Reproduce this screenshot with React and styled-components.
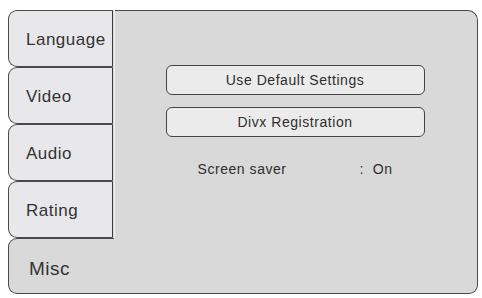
import React from "react";
import styled, { createGlobalStyle } from "styled-components";

const Global = createGlobalStyle`
  html, body { margin: 0; padding: 0; background: #ffffff; }
  body { font-family: "Liberation Sans", Arial, sans-serif; }
`;

const Frame = styled.div`
  display: flex;
  width: 470px;
  height: 284px;
  margin: 10px 0 0 8px;
`;

const TabColumn = styled.div`
  display: flex;
  flex-direction: column;
  width: 105px;
  position: relative;
  z-index: 1;
`;

const Tab = styled.div`
  box-sizing: border-box;
  display: flex;
  align-items: center;
  height: ${(p) => (p.$selected ? "auto" : "57px")};
  flex: ${(p) => (p.$selected ? "1" : "none")};
  padding-left: ${(p) => (p.$selected ? "20px" : "17px")};
  padding-top: ${(p) => (p.$selected ? "5px" : "3px")};
  border: 1px solid #4a4a4a;
  border-right: ${(p) => (p.$selected ? "none" : "1px solid #3a3a3a")};
  border-radius: 9px 0 0 9px;
  background: ${(p) => (p.$selected ? "#d9d9d9" : "#e8e8ea")};
  box-shadow: ${(p) => (p.$selected ? "none" : "1px 0 0 #d9d9d9, 2px 0 0 #f0f0f0")};
  color: #333;
  font-size: ${(p) => (p.$selected ? "19px" : "17px")};
  letter-spacing: 0.5px;
  width: ${(p) => (p.$selected ? "106px" : "105px")};
`;

const Panel = styled.div`
  box-sizing: border-box;
  flex: 1;
  display: flex;
  flex-direction: column;
  align-items: center;
  padding-top: 54px;
  background: #d9d9d9;
  border: 1px solid #4a4a4a;
  border-left: none;
  border-radius: 0 10px 9px 0;
`;

const MenuButton = styled.div`
  box-sizing: border-box;
  display: flex;
  align-items: center;
  justify-content: center;
  width: 259px;
  height: 30px;
  margin-bottom: 12px;
  border: 1px solid #444;
  border-radius: 6px;
  background: #ebebeb;
  color: #2e2e2e;
  font-size: 14px;
  letter-spacing: 0.55px;
`;

const SettingRow = styled.div`
  display: grid;
  grid-template-columns: 162px auto;
  width: 227px;
  padding-left: 32px;
  margin-top: 12px;
  color: #2e2e2e;
  font-size: 14px;
  letter-spacing: 0.55px;
`;

const tabs = ["Language", "Video", "Audio", "Rating", "Misc"];

export default function App() {
  return (
    <>
      <Global />
      <Frame>
        <TabColumn>
          {tabs.map((t) => (
            <Tab key={t} $selected={t === "Misc"}>
              {t}
            </Tab>
          ))}
        </TabColumn>
        <Panel>
          <MenuButton>Use Default Settings</MenuButton>
          <MenuButton>Divx Registration</MenuButton>
          <SettingRow>
            <span>Screen saver</span>
            <span>:&nbsp;&nbsp;On</span>
          </SettingRow>
        </Panel>
      </Frame>
    </>
  );
}
